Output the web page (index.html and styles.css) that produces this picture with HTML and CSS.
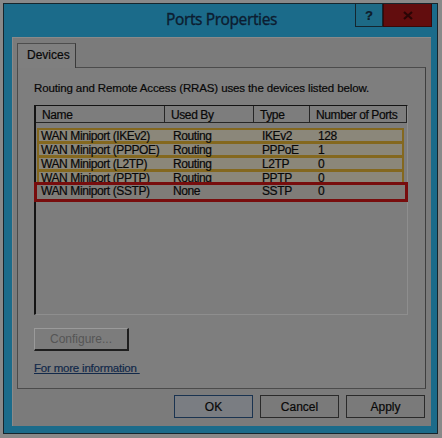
FILE: index.html
```html
<!DOCTYPE html>
<html>
<head>
<meta charset="utf-8">
<link rel="stylesheet" href="styles.css">
</head>
<body>
<div class="window">
  <div class="titlebar">
    <div class="title">Ports Properties</div>
    <div class="caption-buttons">
      <div class="cap help">?</div>
      <div class="cap close"><svg width="10" height="9" viewBox="0 0 10 9"><path d="M1 1 L9 8 M9 1 L1 8" stroke="#2a0505" stroke-width="2.2" fill="none"/></svg></div>
    </div>
  </div>
  <div class="client">
    <div class="tabs"><div class="tab">Devices</div></div>
    <div class="panel">
      <p class="intro">Routing and Remote Access (RRAS) uses the devices listed below.</p>
      <div class="listbox">
        <div class="header">
          <div class="hcell">Name</div>
          <div class="hcell">Used By</div>
          <div class="hcell">Type</div>
          <div class="hcell">Number of Ports</div>
        </div>
        <div class="rows">
          <div class="row mark">
            <span>WAN Miniport (IKEv2)</span><span>Routing</span><span>IKEv2</span><span>128</span>
          </div>
          <div class="row mark">
            <span>WAN Miniport (PPPOE)</span><span>Routing</span><span>PPPoE</span><span>1</span>
          </div>
          <div class="row mark">
            <span>WAN Miniport (L2TP)</span><span>Routing</span><span>L2TP</span><span>0</span>
          </div>
          <div class="row mark">
            <span>WAN Miniport (PPTP)</span><span>Routing</span><span>PPTP</span><span>0</span>
          </div>
          <div class="row alert">
            <span>WAN Miniport (SSTP)</span><span>None</span><span>SSTP</span><span>0</span>
          </div>
        </div>
      </div>
      <div class="btn configure">Configure...</div>
      <a class="link">For more information </a>
    </div>
    <div class="actions">
      <div class="btn default">OK</div>
      <div class="btn">Cancel</div>
      <div class="btn">Apply</div>
    </div>
  </div>
</div>
</body>
</html>
```
FILE: styles.css
```css
html, body {
  margin: 0;
  padding: 0;
  background: #898989;
  width: 442px;
  height: 438px;
  overflow: hidden;
}
body {
  font-family: "Liberation Sans", Arial, sans-serif;
  font-size: 12px;
  color: #080808;
  -webkit-text-stroke: 0.2px #080808;
}
.window {
  margin: 3px 0 0 3px;
  width: 435px;
  height: 431px;
  border: 1px solid #16252c;
  background: #1b6b8a;
  display: flex;
  flex-direction: column;
  padding: 0 6px 7px 8px;
  box-sizing: border-box;
}
.titlebar {
  height: 33px;
  flex: none;
  display: flex;
  align-items: flex-start;
  justify-content: center;
  position: relative;
}
.title {
  font-family: "Noto Sans", sans-serif;
  font-size: 15.5px;
  color: #0c1d31;
  -webkit-text-stroke: 0.3px #0c1d31;
  margin-top: 4px;
  letter-spacing: -0.4px;
}
.caption-buttons {
  position: absolute;
  right: -1px;
  top: 0;
  display: flex;
}
.cap {
  height: 23px;
  box-sizing: border-box;
  display: flex;
  align-items: center;
  justify-content: center;
}
.help {
  width: 28px;
  border: 1px solid #14262f;
  border-top: none;
  background: #1d6a86;
  color: #0f1c2c;
  font-weight: bold;
  font-size: 13px;
}
.close {
  width: 49px;
  background: #620d0e;
  border: 1px solid #3a0808;
  border-top: none;
}
.client {
  flex: 1;
  background: #7b7b7b;
  border-top: 1px solid #8a8a8a;
  border-left: 1px solid #8a8a8a;
  display: flex;
  flex-direction: column;
  padding: 5px 5px 0 4px;
}
.tabs {
  display: flex;
  height: 24px;
}
.tab {
  width: 59px;
  box-sizing: border-box;
  height: 25px;
  border: 1px solid #4d4d4d;
  border-bottom: none;
  background: #7f7f7f;
  padding: 4px 0 0 9px;
  font-size: 12px;
  position: relative;
  z-index: 1;
  border-right-color: #3a3a3a;
}
.panel {
  height: 322px;
  box-sizing: border-box;
  border: 1px solid #4b4b4b;
  border-right-color: #3e3e3e;
  background: #7e7e7e;
  padding: 14px 17px 0 16px;
}
.intro {
  margin: 0;
  font-size: 11.5px;
  height: 23px;
  letter-spacing: -0.12px;
}
.listbox {
  height: 210px;
  box-sizing: border-box;
  border-top: 1px solid #141414;
  border-left: 2px solid #141414;
  border-right: 1px solid #8e8e8e;
  border-bottom: 1px solid #8e8e8e;
  background: #7d7d7d;
  letter-spacing: -0.4px;
}
.header {
  display: grid;
  grid-template-columns: 129px 89px 56px 1fr;
  height: 17px;
}
.hcell {
  border-right: 1px solid #262626;
  border-bottom: 1px solid #262626;
  padding: 2px 0 0 6px;
  box-sizing: border-box;
}
.rows {
  padding-top: 5px;
}
.row {
  display: grid;
  grid-template-columns: 129px 89px 56px 1fr;
  height: 15px;
  box-sizing: border-box;
  line-height: 12px;
}
.mark {
  margin: 0 3px -1px 1px;
  border: 2px solid #84681f;
  background: #8b877a;
  padding-left: 1px;
}
.mark span:first-child { padding-left: 1px; }
.mark span { padding-left: 4px; }
.alert {
  margin: -3px -1px 0 -2px;
  height: 20px;
  border: 3px solid #780d0d;
  line-height: 13px;
  padding-left: 3px;
  background: #7f7c78;
  position: relative;
}
.alert span { padding-left: 4px; }
.alert span:first-child { padding-left: 1px; }
.btn {
  box-sizing: border-box;
  width: 79px;
  height: 23px;
  display: flex;
  align-items: center;
  justify-content: center;
  border: 1px solid #2a2a2a;
  background: #7a7a7a;
  font-size: 12px;
}
.configure {
  margin-top: 13px;
  width: 95px;
  color: #555555;
  -webkit-text-stroke: 0;
  border-top-color: #9a9a9a;
  border-left-color: #9a9a9a;
  border-right: 2px solid #1e1e1e;
  border-bottom: 2px solid #1e1e1e;
  background: #7c7c7c;
}
.link {
  display: inline-block;
  margin-top: 11px;
  color: #12294a;
  -webkit-text-stroke: 0.2px #12294a;
  text-decoration: underline;
  font-size: 11.5px;
  white-space: pre;
  letter-spacing: -0.2px;
}
.actions {
  display: flex;
  justify-content: flex-end;
  gap: 7px;
  margin-top: 6px;
  padding-right: 1px;
}
.default {
  border: 1px solid #1a3350;
  background: #7a7d82;
}
```
